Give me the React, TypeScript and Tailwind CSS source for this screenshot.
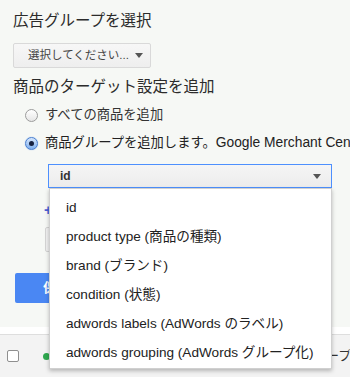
import React from "react";

const font = { fontFamily: '"Liberation Sans", "Noto Sans CJK JP", sans-serif' };

function Caret({ className = "" }: { className?: string }) {
  return (
    <svg width="8" height="5" viewBox="0 0 8 5" className={"shrink-0 " + className}>
      <polygon points="0,0 8,0 4,5" fill="#555" />
    </svg>
  );
}

function Radio({ checked }: { checked?: boolean }) {
  if (checked) {
    return (
      <span className="flex h-[13px] w-[13px] shrink-0 items-center justify-center rounded-full border border-[#4a7fd0] bg-gradient-to-b from-[#d6e6fb] to-[#7fb0ee] shadow-[0_0_1px_#7aa7e6]">
        <span className="h-[5px] w-[5px] rounded-full bg-[#16213f]" />
      </span>
    );
  }
  return <span className="block h-[13px] w-[13px] shrink-0 rounded-full border border-[#9c9c9c] bg-gradient-to-b from-white to-[#e6e6e6]" />;
}

const items = [
  "id",
  "product type (商品の種類)",
  "brand (ブランド)",
  "condition (状態)",
  "adwords labels (AdWords のラベル)",
  "adwords grouping (AdWords グループ化)",
];

export default function App() {
  return (
    <div className="relative h-[377px] w-[350px] overflow-hidden bg-[#f6f8f5] text-[#333]" style={font}>
      <div className="pl-[13px] pt-[12px]">
        <h2 className="text-[15.5px] leading-[18px] text-[#2b2b2b]">広告グループを選択</h2>
        <button className="mt-[13px] flex h-[25px] w-[138px] items-center gap-[6px] rounded-[2px] border border-[#d9d9d9] bg-gradient-to-b from-[#f7f7f7] to-[#eeeeee] pl-[14px] text-[11.5px] text-[#444]">
          選択してください...
          <Caret />
        </button>
        <h2 className="mt-[10px] text-[15.5px] leading-[18px] text-[#2b2b2b]">商品のターゲット設定を追加</h2>

        <div className="ml-[12px] mt-[9px] flex h-[20px] items-center gap-[7px] whitespace-nowrap text-[13.3px]">
          <Radio />
          すべての商品を追加
        </div>
        <div className="ml-[12px] mt-[8px] flex h-[20px] items-center gap-[7px] whitespace-nowrap text-[13.3px] text-[#222]">
          <Radio checked />
          <span>
            商品グループを追加します。<span className="text-[13.8px]">Google Merchant Center</span>
          </span>
        </div>

        <div className="relative ml-[35px] mt-[11px] w-[284px]">
          <div className="flex h-[24px] items-center justify-between border border-[#4d90fe] bg-gradient-to-b from-[#f5f5f5] to-[#ececec] pl-[11px] pr-[10px] text-[12px] font-bold text-[#333]">
            id
            <Caret />
          </div>
          <ul className="absolute left-[1px] top-full z-10 w-[283px] border border-[#d0d0d0] bg-white pt-[5px] text-[13.6px] text-[#222] shadow-[0_2px_4px_rgba(0,0,0,0.25)]">
            {items.map((t) => (
              <li key={t} className="flex h-[29px] items-center whitespace-nowrap pl-[16px]">
                {t}
              </li>
            ))}
          </ul>
        </div>

        <div className="ml-[31px] mt-[12px] h-[20px] text-[14px] font-bold leading-[20px] text-[#4a62d8]">+ 商品グループを追加</div>
        <div className="ml-[32px] mt-[7px] h-[25px] w-[120px] rounded-[2px] border border-[#d4d4d4] bg-[#f0f0f0]" />
        <button className="ml-[2px] mt-[21px] h-[30px] w-[90px] rounded-[2px] bg-[#4a87f3] pl-[28px] text-left text-[13px] font-bold text-white">
          保存
        </button>
      </div>

      <div className="mt-[24px] h-[8px] border-b border-[#dedede] bg-white" />
      <div className="flex h-[42px] items-center bg-[#f3f3f3] text-[13px] text-[#333]">
        <span className="ml-[7px] block h-[12px] w-[12px] shrink-0 rounded-[2px] border border-[#8f8f8f] bg-white" />
        <span className="ml-[24px] block h-[7px] w-[7px] shrink-0 rounded-full bg-[#2fa84f]" />
        <span className="ml-[224px] whitespace-nowrap">広告グループ</span>
      </div>
    </div>
  );
}
